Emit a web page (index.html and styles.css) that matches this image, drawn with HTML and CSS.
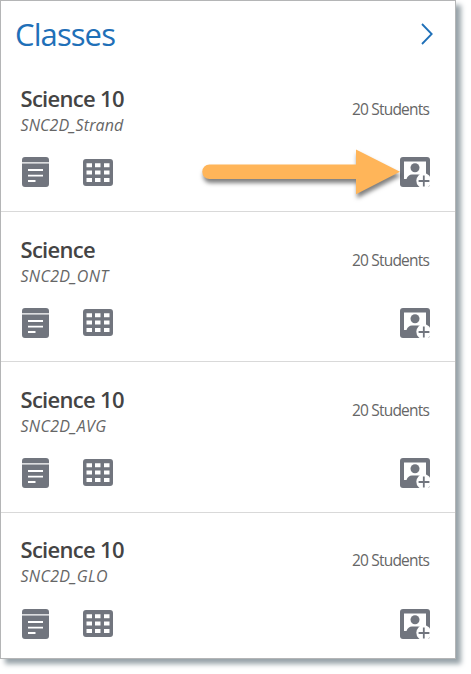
FILE: index.html
```html
<!DOCTYPE html>
<html lang="en">
<head>
  <meta charset="UTF-8">
  <meta name="viewport" content="width=device-width, initial-scale=1.0">
  <title>Classes</title>
  <link rel="stylesheet" href="styles.css">
</head>
<body>
  <!-- Shared icons -->
  <svg class="icon-defs" width="0" height="0" aria-hidden="true">
    <symbol id="icon-notes" viewBox="0 0 27 30">
      <path d="M3 0h21a3 3 0 0 1 3 3v2.200H0V3a3 3 0 0 1 3-3zM0 6.500h27v20.500a3 3 0 0 1-3 3H3a3 3 0 0 1-3-3z"/>
      <path class="icon-line" d="M6 13h15M6 18.600h15M6 24h7.500"/>
    </symbol>
    <symbol id="icon-grid" viewBox="0 0 30 27">
      <path fill-rule="evenodd" d="M3 0h24a3 3 0 0 1 3 3v21a3 3 0 0 1-3 3H3a3 3 0 0 1-3-3V3a3 3 0 0 1 3-3zM3.500 4.200v4h5.500v-4zm8.500 0v4h5.500v-4zm9 0v4h5.500v-4zM3.500 11.500v4h5.500v-4zm8.500 0v4h5.500v-4zm9 0v4h5.500v-4zM3.500 19v4h5.500v-4zm8.500 0v4h5.500v-4zm9 0v4h5.500v-4z"/>
    </symbol>
    <symbol id="icon-add-student" viewBox="0 0 30 30">
      <rect width="30" height="30" rx="3"/>
      <path class="icon-paper" d="M4 4.500h22v17.500H4z"/>
      <circle cx="15" cy="10.700" r="4.500"/>
      <path d="M4 22h2.500c1-3 3-4.500 5.500-4.500h6c2.500 0 4.500 1 5.500 3V26H4z"/>
      <circle class="icon-paper" cx="23.800" cy="23.800" r="7.500"/>
      <path class="icon-plus" d="M23.800 18.600v10.800M18.600 24h10.800"/>
    </symbol>
  </svg>

  <div class="class-panel">
    <header class="panel-header">
      <h1>Classes</h1>
      <svg class="chevron" width="12" height="22" viewBox="0 0 12 22"><path d="M1 1l9.700 10L1 21"/></svg>
    </header>

    <section class="class-row">
      <div class="class-info">
        <div>
          <h2>Science 10</h2>
          <p class="class-code code-strand">SNC2D_Strand</p>
        </div>
        <span class="student-count">20 Students</span>
      </div>
      <div class="class-actions">
        <svg class="icon notes"><use href="#icon-notes"/></svg>
        <svg class="icon seating"><use href="#icon-grid"/></svg>
        <svg class="icon add-student"><use href="#icon-add-student"/></svg>
      </div>
      <svg class="arrow" width="198" height="46" viewBox="0 0 198 46">
        <path d="M7.500 15.500H154V.5l44 22.300-44 22.500V30H7.500a7.250 7.250 0 0 1 0-14.500z"/>
      </svg>
    </section>

    <section class="class-row">
      <div class="class-info">
        <div>
          <h2>Science</h2>
          <p class="class-code">SNC2D_ONT</p>
        </div>
        <span class="student-count">20 Students</span>
      </div>
      <div class="class-actions">
        <svg class="icon notes"><use href="#icon-notes"/></svg>
        <svg class="icon seating"><use href="#icon-grid"/></svg>
        <svg class="icon add-student"><use href="#icon-add-student"/></svg>
      </div>
    </section>

    <section class="class-row">
      <div class="class-info">
        <div>
          <h2>Science 10</h2>
          <p class="class-code">SNC2D_AVG</p>
        </div>
        <span class="student-count">20 Students</span>
      </div>
      <div class="class-actions">
        <svg class="icon notes"><use href="#icon-notes"/></svg>
        <svg class="icon seating"><use href="#icon-grid"/></svg>
        <svg class="icon add-student"><use href="#icon-add-student"/></svg>
      </div>
    </section>

    <section class="class-row">
      <div class="class-info">
        <div>
          <h2>Science 10</h2>
          <p class="class-code">SNC2D_GLO</p>
        </div>
        <span class="student-count">20 Students</span>
      </div>
      <div class="class-actions">
        <svg class="icon notes"><use href="#icon-notes"/></svg>
        <svg class="icon seating"><use href="#icon-grid"/></svg>
        <svg class="icon add-student"><use href="#icon-add-student"/></svg>
      </div>
    </section>
  </div>
</body>
</html>
```

FILE: styles.css
```css
* {
  box-sizing: border-box;
}

body {
  min-height: 674px;
  margin: 0;
  background: #fff;
  color: #444;
  font-family: "Open Sans", "Noto Sans", sans-serif;
}

h1, h2, p {
  margin: 0;
}

.icon-defs {
  display: none;
}

.class-panel {
  width: 456px;
  height: 659px;
  border: 1px solid #b4b5b6;
  background: #fff;
  box-shadow: 5px 5px 5px 0 #98a3a9;
}

/* Header */
.panel-header {
  display: flex;
  justify-content: space-between;
  height: 61px;
  padding: 11px 22px 0 14px;
}

.panel-header h1 {
  color: #1f70b8;
  font-size: 31px;
  font-weight: 400;
  line-height: 44px;
  letter-spacing: -0.9px;
}

.chevron {
  margin-top: 11px;
  fill: none;
  stroke: #1f70b8;
  stroke-width: 1.8;
}

/* Class rows */
.class-row {
  position: relative;
  height: 150.2px;
  padding: 23.4px 25px 0 19.5px;
  border-bottom: 1px solid #d9d9d9;
}

.class-row:last-child {
  height: 145px;
  border-bottom: 0;
}

.class-info {
  display: flex;
  justify-content: space-between;
  height: 72px;
}

.class-row:last-child .class-info {
  height: 73px;
}

.class-info h2 {
  font-size: 22px;
  font-weight: 600;
  line-height: 26px;
  letter-spacing: -0.7px;
}

.class-code {
  margin-top: 2px;
  color: #666;
  font-size: 16px;
  font-style: italic;
  line-height: 24px;
  letter-spacing: 0.3px;
}

.code-strand {
  letter-spacing: 0.1px;
}

.student-count {
  margin-top: 13px;
  margin-right: 1px;
  color: #666;
  font-size: 15.5px;
  line-height: 22px;
  letter-spacing: -0.8px;
}

.class-actions {
  display: flex;
  align-items: center;
  height: 30px;
  padding-left: 1.5px;
}

.icon {
  display: block;
  fill: #71757e;
}

.notes {
  width: 27px;
  height: 30px;
}

.seating {
  width: 30px;
  height: 27px;
  margin-left: 34px;
}

.add-student {
  width: 30px;
  height: 30px;
  margin-left: auto;
}

.icon-line {
  stroke: #fff;
  stroke-width: 1.8;
}

.icon-paper {
  fill: #fff;
}

.icon-plus {
  stroke: #71757e;
  stroke-width: 1.8;
}

/* Callout over the first row */
.arrow {
  position: absolute;
  top: 87px;
  left: 201px;
  overflow: visible;
  fill: #ffb559;
  filter: drop-shadow(1px 4px 2px rgba(0, 0, 0, 0.5));
}
```
